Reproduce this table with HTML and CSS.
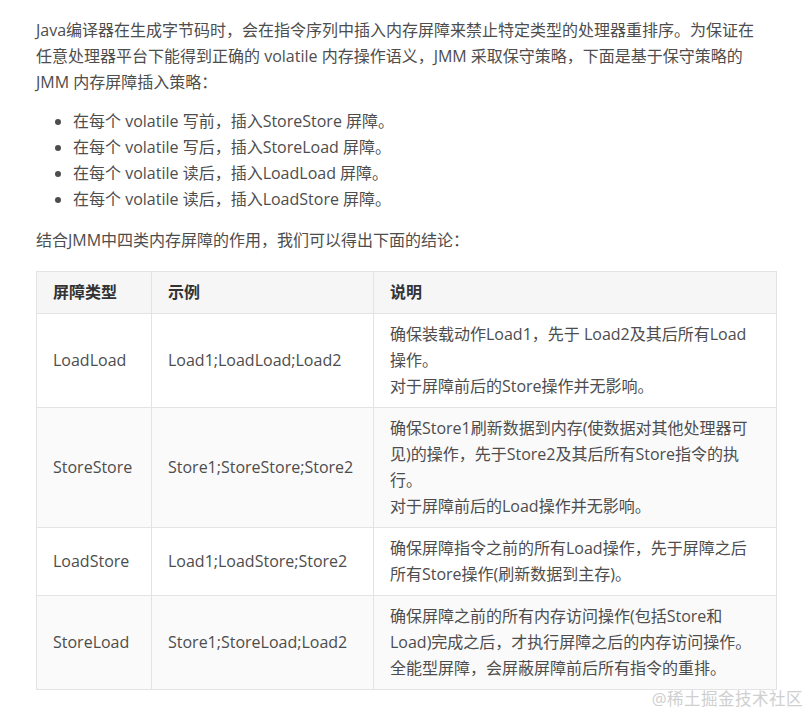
FILE: index.html
```html
<!DOCTYPE html>
<html lang="zh-CN">
<head>
<meta charset="utf-8">
<link rel="stylesheet" href="styles.css">
</head>
<body>
<div class="article">
  <p class="intro">Java编译器在生成字节码时，会在指令序列中插入内存屏障来禁止特定类型的处理器重排序。为保证在任意处理器平台下能得到正确的 volatile 内存操作语义，JMM 采取保守策略，下面是基于保守策略的 JMM 内存屏障插入策略：</p>
  <ul class="rules">
    <li>在每个 volatile 写前，插入StoreStore 屏障。</li>
    <li>在每个 volatile 写后，插入StoreLoad 屏障。</li>
    <li>在每个 volatile 读后，插入LoadLoad 屏障。</li>
    <li>在每个 volatile 读后，插入LoadStore 屏障。</li>
  </ul>
  <p class="lead">结合JMM中四类内存屏障的作用，我们可以得出下面的结论：</p>
  <table class="barriers">
    <colgroup>
      <col class="c1"><col class="c2"><col class="c3">
    </colgroup>
    <thead>
      <tr><th>屏障类型</th><th>示例</th><th>说明</th></tr>
    </thead>
    <tbody>
      <tr><td>LoadLoad</td><td>Load1;LoadLoad;Load2</td><td>确保装载动作Load1，先于 Load2及其后所有Load操作。<br>对于屏障前后的Store操作并无影响。</td></tr>
      <tr><td>StoreStore</td><td>Store1;StoreStore;Store2</td><td>确保Store1刷新数据到内存(使数据对其他处理器可见)的操作，先于Store2及其后所有Store指令的执行。<br>对于屏障前后的Load操作并无影响。</td></tr>
      <tr><td>LoadStore</td><td>Load1;LoadStore;Store2</td><td>确保屏障指令之前的所有Load操作，先于屏障之后所有Store操作(刷新数据到主存)。</td></tr>
      <tr><td>StoreLoad</td><td>Store1;StoreLoad;Load2</td><td>确保屏障之前的所有内存访问操作(包括Store和Load)完成之后，才执行屏障之后的内存访问操作。<br>全能型屏障，会屏蔽屏障前后所有指令的重排。</td></tr>
    </tbody>
  </table>
  <div class="watermark">@稀土掘金技术社区</div>
</div>
</body>
</html>
```
FILE: styles.css
```css
html, body {
  margin: 0;
  padding: 0;
  background: #fff;
}
body {
  font-family: "Open Sans", "Noto Sans CJK SC", sans-serif;
  font-size: 16px;
  line-height: 26px;
  color: #4d4d4d;
}
.article {
  padding: 17px 35px 0 36px;
  position: relative;
  height: 697px;
}
.intro {
  margin: 0;
  max-width: 730px;
}
.rules {
  margin: 13px 0 0 0;
  padding-left: 37px;
}
.rules li {
  line-height: 26px;
}
.lead {
  margin: 15px 0 0 0;
}
.barriers {
  margin-top: 18px;
  border-collapse: collapse;
  width: 741px;
}
.c1 { width: 115px; }
.c2 { width: 222px; }
.c3 { width: 404px; }
.barriers th,
.barriers td {
  border: 1px solid #e3e3e3;
  padding: 7px 16px 8px;
  text-align: left;
  vertical-align: middle;
}
.barriers th {
  background: #f6f6f6;
  color: #333;
  font-weight: bold;
}
.barriers tbody tr:nth-child(even) td {
  background: #fafafa;
}
.watermark {
  position: absolute;
  right: 8px;
  bottom: 2px;
  font-size: 16.5px;
  color: #cfcfcf;
  letter-spacing: 0.5px;
}
```
